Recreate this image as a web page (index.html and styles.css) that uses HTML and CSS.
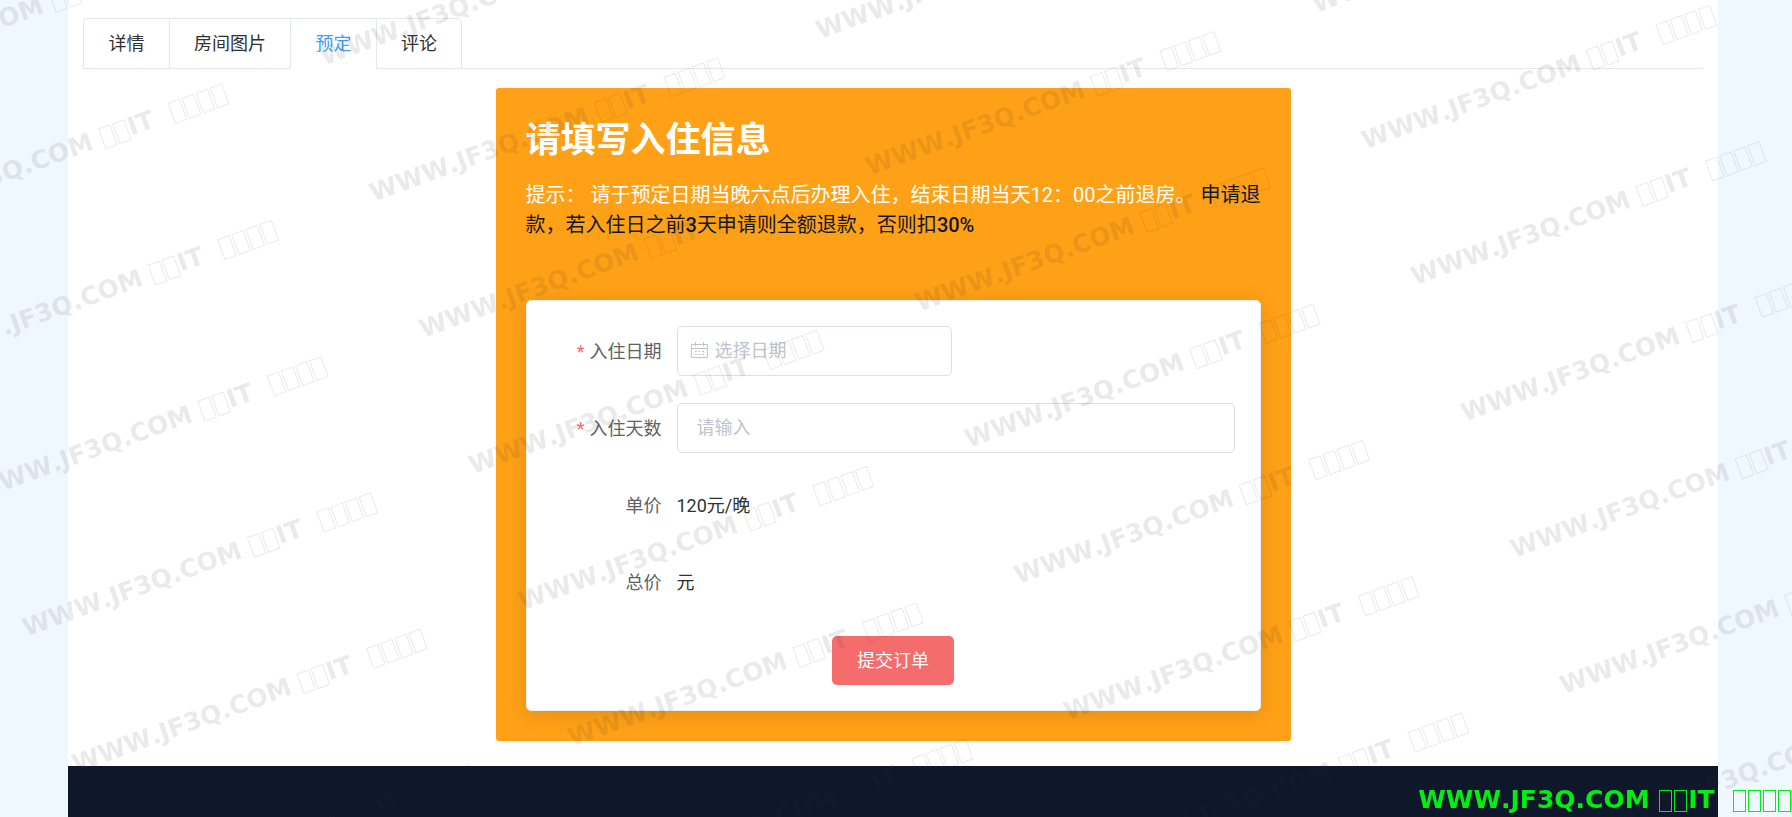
FILE: index.html
```html
<!DOCTYPE html>
<html lang="zh-CN">
<head>
    <meta charset="UTF-8">
    <meta name="viewport" content="width=device-width, initial-scale=1.0">
    <title>房间预定</title>
    <link rel="stylesheet" href="styles.css">
</head>
<body>
    <div class="page">
        <main class="content">
            <nav class="tabs">
                <button class="tab" type="button">详情</button>
                <button class="tab" type="button">房间图片</button>
                <button class="tab active" type="button">预定</button>
                <button class="tab" type="button">评论</button>
            </nav>

            <section class="booking">
                <h1 class="booking-title">请填写入住信息</h1>
                <p class="booking-tip">提示： 请于预定日期当晚六点后办理入住，结束日期当天12：00之前退房。 <span class="refund">申请退款，若入住日之前<b>3</b>天申请则全额退款，否则扣<b>30%</b></span></p>

                <form class="booking-form">
                    <div class="form-item">
                        <label class="form-label required" for="checkInDate">入住日期</label>
                        <div class="date-box">
                            <svg class="date-icon" viewBox="0 0 17 17" fill="none" stroke="currentColor">
                                <path d="M.5 2.5h16v13H.5zM.5 6.5h16M4.500 0v4M12.500 0v4"/>
                                <path d="M4 9.500h2M7.500 9.500h2M11 9.500h2M4 12.500h2M7.500 12.500h2M11 12.500h2"/>
                            </svg>
                            <input class="date-input" id="checkInDate" type="text" placeholder="选择日期">
                        </div>
                    </div>
                    <div class="form-item">
                        <label class="form-label required" for="days">入住天数</label>
                        <input class="text-input" id="days" type="text" placeholder="请输入">
                    </div>
                    <div class="form-item">
                        <span class="form-label">单价</span>
                        <span class="form-text">120元/晚</span>
                    </div>
                    <div class="form-item">
                        <span class="form-label">总价</span>
                        <span class="form-text">元</span>
                    </div>
                    <button class="submit-button" type="button">提交订单</button>
                </form>
            </section>
        </main>
        <footer class="footer"></footer>
    </div>

    <div class="watermark" aria-hidden="true">
        <div class="watermark-grid" id="watermarkGrid"></div>
    </div>
    <div class="mark site-mark" id="siteMark">WWW.JF3Q.COM <i></i><i></i>IT&nbsp; <i></i><i></i><i></i><i></i></div>

    <script>
        // 水印铺满整个窗口
        const grid = document.getElementById('watermarkGrid');
        const siteMark = document.getElementById('siteMark');

        for (let i = 0; i < 60; i++) {
            const mark = document.createElement('div');
            mark.className = 'mark';
            mark.innerHTML = siteMark.innerHTML;
            grid.appendChild(mark);
        }

        // 切换标签
        document.querySelectorAll('.tab').forEach(tab => {
            tab.addEventListener('click', () => {
                document.querySelector('.tab.active').classList.remove('active');
                tab.classList.add('active');
            });
        });
    </script>
</body>
</html>
```
FILE: styles.css
```css
* {
    box-sizing: border-box;
}

body {
    margin: 0;
    padding: 0 74px 0 68px;
    min-height: 100vh;
    display: flex;
    font-family: Roboto, "Noto Sans CJK SC", sans-serif;
    font-size: 18px;
    color: #303133;
    background: #f0f8ff;
}

button,
input {
    font: inherit;
}

.page {
    flex: 1;
    display: flex;
    flex-direction: column;
    background: white;
}

.content {
    padding: 18px 15px 25px;
}

.tabs {
    display: flex;
    border-bottom: 1px solid #e4e7ed;
    margin-bottom: 19px;
}

.tab {
    min-width: 86px;
    height: 51px;
    margin-bottom: -1px;
    padding: 0 24px 4px;
    border: 1px solid #e4e7ed;
    border-right: none;
    background: white;
    color: #303133;
    cursor: pointer;
}

.tab:first-child {
    border-top-left-radius: 5px;
}

.tab:last-child {
    border-right: 1px solid #e4e7ed;
    border-top-right-radius: 5px;
}

.tab.active {
    color: #409eff;
    border-bottom-color: white;
}

.booking {
    max-width: 795px;
    margin: 0 auto;
    padding: 30px;
    border-radius: 3px;
    background: #ffa117;
}

.booking-title {
    margin: 0 0 16px;
    font-size: 35px;
    line-height: 46px;
    color: white;
}

.booking-tip {
    margin: 0 0 60px;
    font-size: 20px;
    line-height: 30px;
    color: white;
}

.refund {
    color: #111827;
}

.refund b {
    font-weight: 500;
}

.booking-form {
    display: flex;
    flex-direction: column;
    gap: 27px;
    padding: 25px;
    border: 1px solid #ebeef5;
    border-radius: 5px;
    background: white;
    box-shadow: 0 3px 20px rgba(0, 0, 0, 0.12);
}

.form-item {
    display: flex;
    align-items: center;
    height: 50px;
}

.form-label {
    flex: 0 0 125px;
    padding: 0 15px 3px 0;
    text-align: right;
    color: #606266;
}

.form-label.required::before {
    content: "*";
    margin-right: 5px;
    color: #f56c6c;
}

.form-text {
    padding-bottom: 3px;
}

.date-box,
.text-input {
    height: 50px;
    border: 1px solid #dcdfe6;
    border-radius: 5px;
    background: white;
}

.date-box {
    display: flex;
    align-items: center;
    gap: 7px;
    width: 275px;
    padding: 0 13px 2px;
}

.date-icon {
    flex: none;
    width: 17px;
    height: 17px;
    color: #c0c4cc;
}

.date-input {
    flex: 1;
    min-width: 0;
    padding: 0;
    border: none;
    outline: none;
    background: none;
}

.text-input {
    flex: 1;
    padding: 0 19px 2px;
    outline: none;
}

input::placeholder {
    color: #c0c4cc;
}

.submit-button {
    align-self: center;
    height: 49px;
    margin-top: 2px;
    padding: 0 25px 3px;
    border: none;
    border-radius: 5px;
    background: #f56c6c;
    color: white;
    cursor: pointer;
}

.footer {
    flex: 1;
    min-height: 51px;
    background: #0f172a;
}

.watermark {
    position: fixed;
    inset: 0;
    overflow: hidden;
    pointer-events: none;
    color: rgba(50, 50, 50, 0.1);
}

.watermark-grid {
    position: absolute;
    left: -646px;
    top: 178px;
    display: grid;
    grid-template-columns: repeat(6, 475px);
    grid-auto-rows: 145px;
    align-items: center;
    transform: rotate(-20deg);
    transform-origin: 0 0;
}

.mark {
    font-family: "DejaVu Sans", sans-serif;
    font-size: 25px;
    line-height: 30px;
    font-weight: bold;
    font-kerning: none;
    white-space: nowrap;
}

.mark i {
    display: inline-block;
    width: 13px;
    height: 22px;
    margin: 0 1px;
    border: 1px solid;
    vertical-align: -4px;
}

.site-mark {
    position: fixed;
    right: 0;
    bottom: 2px;
    color: #00ee11;
    pointer-events: none;
}
```
